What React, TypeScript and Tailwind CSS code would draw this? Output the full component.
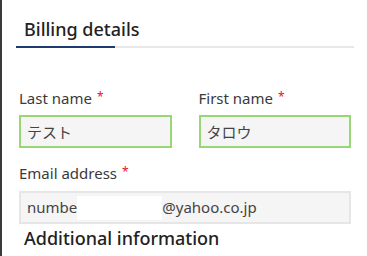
import React from "react";

const SectionTitle: React.FC<{ title: string; gap: string; className?: string }> = ({ title, gap, className }) => (
  <div className={className}>
    <h2 className="pl-2 text-[18px] leading-[24px] font-medium text-[#222]">{title}</h2>
    <div className={`${gap} h-[2px] bg-[#e8e8e8]`}>
      <div className="h-[2px] w-[99px] bg-[#1d3b6f]" />
    </div>
  </div>
);

const Label: React.FC<{ text: string }> = ({ text }) => (
  <label className="block text-[15px] leading-[20px] text-[#3a3a3a]">
    {text}
    <span className="ml-[5px] relative -top-[3px] text-[12px] text-[#e8102a]">*</span>
  </label>
);

export default function App() {
  return (
    <div
      className="w-[367px] h-[256px] overflow-hidden bg-white border-l-2 border-[#3a3a3a]"
      style={{ fontFamily: '"Noto Sans", "Noto Sans CJK JP", sans-serif' }}
    >
      <div className="pl-[14px] pr-[13px] pt-[17px]">
        <SectionTitle title="Billing details" gap="mt-[5px]" />

        <div className="px-[3px] mt-[40px]">
          <div className="grid grid-cols-2 gap-x-[27px]">
            <div>
              <Label text="Last name" />
              <div className="mt-[5px] h-[33px] flex items-center px-[6px] pt-[2px] border-2 border-[#98d676] bg-[#f5f5f5] text-[15px] text-[#444]">
                テスト
              </div>
            </div>
            <div>
              <Label text="First name" />
              <div className="mt-[5px] h-[33px] flex items-center px-[6px] pt-[2px] border-2 border-[#98d676] bg-[#f5f5f5] text-[15px] text-[#444]">
                タロウ
              </div>
            </div>
          </div>

          <div className="mt-[15px]">
            <Label text="Email address" />
            <div className="mt-[6px] h-[33px] flex items-center px-[6px] border-2 border-[#e6e6e6] bg-[#f5f5f5] text-[15px] text-[#444]">
              <span>numbe</span>
              <span className="inline-block w-[85px] h-[24px] bg-white" />
              <span>@yahoo.co.jp</span>
            </div>
          </div>
        </div>

        <SectionTitle title="Additional information" gap="mt-[6px]" className="mt-[2px]" />
      </div>
    </div>
  );
}
